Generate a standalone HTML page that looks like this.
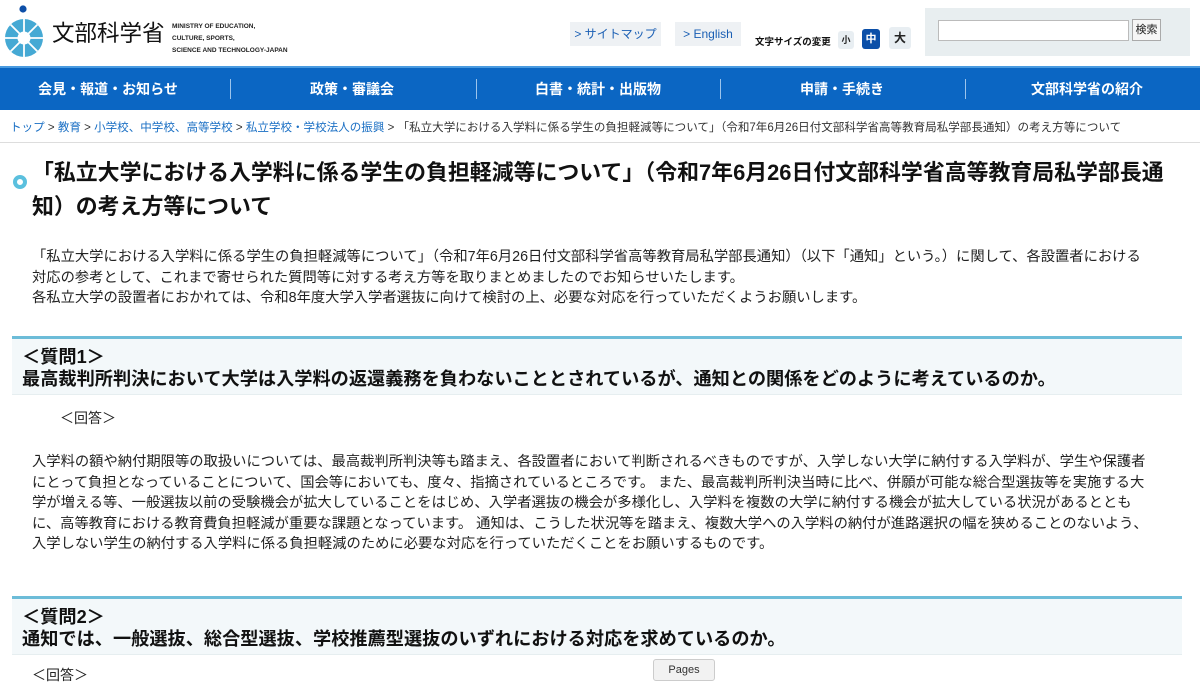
<!DOCTYPE html>
<html><head><meta charset="utf-8">
<style>
*{margin:0;padding:0;box-sizing:border-box}
body{width:1200px;height:675px;overflow:hidden;background:#fff;font-family:"Liberation Sans","Noto Sans CJK JP",sans-serif;color:#222;position:relative}
.a{position:absolute;white-space:nowrap}
.btn{background:#eef1f4;color:#1a5fb4;font-size:12px;line-height:24px;text-align:center}
.nav{position:absolute;left:0;top:66px;width:1200px;height:44px;background:#0b66c3;border-top:2px solid #4a9be0}
.nav div{position:absolute;top:0;width:244px;text-align:center;color:#fff;font-weight:bold;font-size:14px;line-height:42px}
.sep{position:absolute;top:11px;width:1px;height:20px;background:#9cc4ec}
.p{font-size:14.3px;line-height:20.5px;color:#222;left:32px}
.qb{position:absolute;left:12px;width:1170px;background:#f3f8fa;border-top:3px solid #6cbcd8;border-bottom:1px solid #e6eef0}
.qb div{font-size:18.2px;font-weight:bold;line-height:22px;color:#111;padding-left:10px}
</style></head><body>
<svg class="a" style="left:4px;top:4px" width="44" height="54" viewBox="0 0 44 54">
<circle cx="19" cy="5" r="3.6" fill="#0d4fa8"/>
<circle cx="20" cy="34" r="19" fill="#45a9d4"/>
<g stroke="#fff" stroke-width="1.8">
<line x1="20" y1="15" x2="20" y2="53"/><line x1="1" y1="34" x2="39" y2="34"/>
<line x1="6.6" y1="20.6" x2="33.4" y2="47.4"/><line x1="33.4" y1="20.6" x2="6.6" y2="47.4"/>
</g>
<circle cx="20" cy="34" r="6.5" fill="#fff"/>
</svg>
<div class="a" style="left:52px;top:19px;font-size:22.5px;line-height:30px;color:#111">文部科学省</div>
<div class="a" style="left:172px;top:21px;font-size:6.5px;line-height:12px;color:#222;font-weight:bold">MINISTRY OF EDUCATION,<br>CULTURE, SPORTS,<br>SCIENCE AND TECHNOLOGY-JAPAN</div>
<div class="a btn" style="left:570px;top:22px;width:91px">&gt; サイトマップ</div>
<div class="a btn" style="left:675px;top:22px;width:66px">&gt; English</div>
<div class="a" style="left:755px;top:34px;font-size:9.5px;font-weight:bold;color:#111">文字サイズの変更</div>
<div class="a" style="left:838px;top:31px;width:16px;height:18px;border-radius:3px;background:#e8eef2;font-size:9px;text-align:center;line-height:18px;font-weight:bold">小</div>
<div class="a" style="left:862px;top:29px;width:18px;height:20px;border-radius:3px;background:#0b4fa8;color:#fff;font-size:11px;text-align:center;line-height:20px;font-weight:bold">中</div>
<div class="a" style="left:889px;top:27px;width:22px;height:22px;border-radius:3px;background:#e8eef2;font-size:12px;text-align:center;line-height:22px;font-weight:bold">大</div>
<div class="a" style="left:925px;top:8px;width:265px;height:48px;background:#e8eef0"></div>
<div class="a" style="left:938px;top:20px;width:191px;height:21px;background:#fff;border:1px solid #bbb"></div>
<div class="a" style="left:1132px;top:19px;width:29px;height:22px;background:#f6f6f6;border:1px solid #aaa;font-size:11px;line-height:20px;text-align:center">検索</div>
<div class="nav">
<div style="left:-14px">会見・報道・お知らせ</div><span class="sep" style="left:230px"></span>
<div style="left:230px">政策・審議会</div><span class="sep" style="left:476px"></span>
<div style="left:476px">白書・統計・出版物</div><span class="sep" style="left:720px"></span>
<div style="left:720px">申請・手続き</div><span class="sep" style="left:965px"></span>
<div style="left:965px">文部科学省の紹介</div>
</div>
<div class="a" style="left:10px;top:120px;font-size:11.55px;line-height:16px;color:#333"><span style="color:#1a6fc4">トップ</span> &gt; <span style="color:#1a6fc4">教育</span> &gt; <span style="color:#1a6fc4">小学校、中学校、高等学校</span> &gt; <span style="color:#1a6fc4">私立学校・学校法人の振興</span> &gt; 「私立大学における入学料に係る学生の負担軽減等について」（令和7年6月26日付文部科学省高等教育局私学部長通知）の考え方等について</div>
<div class="a" style="left:0;top:142px;width:1200px;height:1px;background:#ddd"></div>
<div class="a" style="left:13px;top:175px;width:14px;height:14px;border-radius:50%;border:4px solid #5bc0de;background:#fff"></div>
<div class="a" style="left:32px;top:156px;font-size:21.9px;font-weight:bold;line-height:34px;color:#111">「私立大学における入学料に係る学生の負担軽減等について」（令和7年6月26日付文部科学省高等教育局私学部長通<br>知）の考え方等について</div>
<div class="a p" style="top:247px">「私立大学における入学料に係る学生の負担軽減等について」（令和7年6月26日付文部科学省高等教育局私学部長通知）（以下「通知」という。）に関して、各設置者における<br>対応の参考として、これまで寄せられた質問等に対する考え方等を取りまとめましたのでお知らせいたします。<br>各私立大学の設置者におかれては、令和8年度大学入学者選抜に向けて検討の上、必要な対応を行っていただくようお願いします。</div>
<div class="qb" style="top:336px;height:59px;padding-top:7px"><div>＜質問1＞<br>最高裁判所判決において大学は入学料の返還義務を負わないこととされているが、通知との関係をどのように考えているのか。</div></div>
<div class="a" style="left:60px;top:409px;font-size:14px;line-height:18px">＜回答＞</div>
<div class="a p" style="top:452px">入学料の額や納付期限等の取扱いについては、最高裁判所判決等も踏まえ、各設置者において判断されるべきものですが、入学しない大学に納付する入学料が、学生や保護者<br>にとって負担となっていることについて、国会等においても、度々、指摘されているところです。 また、最高裁判所判決当時に比べ、併願が可能な総合型選抜等を実施する大<br>学が増える等、一般選抜以前の受験機会が拡大していることをはじめ、入学者選抜の機会が多様化し、入学料を複数の大学に納付する機会が拡大している状況があるととも<br>に、高等教育における教育費負担軽減が重要な課題となっています。 通知は、こうした状況等を踏まえ、複数大学への入学料の納付が進路選択の幅を狭めることのないよう、<br>入学しない学生の納付する入学料に係る負担軽減のために必要な対応を行っていただくことをお願いするものです。</div>
<div class="qb" style="top:596px;height:59px;padding-top:7px"><div>＜質問2＞<br>通知では、一般選抜、総合型選抜、学校推薦型選抜のいずれにおける対応を求めているのか。</div></div>
<div class="a" style="left:32px;top:666px;font-size:14px;line-height:18px">＜回答＞</div>
<div class="a" style="left:653px;top:659px;width:62px;height:22px;background:#f2f2f2;border:1px solid #ccc;border-radius:3px;font-size:11px;text-align:center;line-height:20px;color:#333">Pages</div>
</body></html>
